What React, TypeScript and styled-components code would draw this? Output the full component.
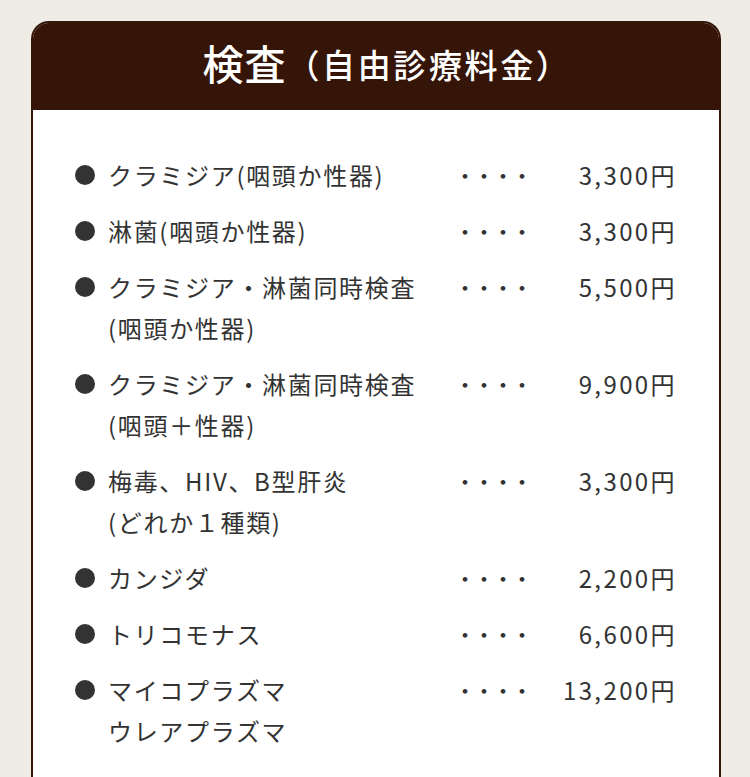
import styled, { createGlobalStyle } from 'styled-components';

const GlobalStyle = createGlobalStyle`
  html, body {
    margin: 0;
    padding: 0;
    background: #efebe5;
  }
  body {
    font-family: "Noto Sans CJK JP", "Noto Sans", sans-serif;
    color: #333;
  }
`;

const Page = styled.div`
  padding: 21px 29px 0 31px;
  height: 756px;
  overflow: hidden;
`;

const Card = styled.section`
  background: #fff;
  border: 2px solid #351507;
  border-bottom: none;
  border-radius: 18px 18px 0 0;
  overflow: hidden;
  min-height: 760px;
`;

const Header = styled.h2`
  margin: 0;
  height: 87px;
  padding: 0 0 10px 22px;
  box-sizing: border-box;
  background: #351507;
  color: #fff;
  display: flex;
  align-items: center;
  justify-content: center;
  font-weight: 500;
  letter-spacing: 0.04em;
`;

const TitleMain = styled.span`
  font-size: 41px;
`;

const TitleSub = styled.span`
  font-size: 33px;
  margin-left: 0;
  margin-top: 4px;
  letter-spacing: 0.08em;
`;

const PriceList = styled.ul`
  list-style: none;
  margin: 0;
  padding: 44px 44px 0 42px;
`;

const Row = styled.li`
  display: grid;
  grid-template-columns: 1fr 80px 150px;
  align-items: start;
  font-size: 24px;
  line-height: 41px;
  letter-spacing: 0.07em;
  margin-bottom: 15px;
`;

const Name = styled.div`
  display: flex;
`;

const Bullet = styled.span`
  flex: none;
  width: 20px;
  height: 20px;
  border-radius: 50%;
  background: #333;
  margin: 11px 13px 0 0;
`;

const Dots = styled.span`
  font-size: 22px;
  letter-spacing: -3px;
  padding-left: 9px;
`;

const Price = styled.span`
  text-align: right;
  letter-spacing: 0.1em;
  margin-right: -2px;
`;

const items = [
  { name: ['クラミジア(咽頭か性器)'], price: '3,300円' },
  { name: ['淋菌(咽頭か性器)'], price: '3,300円' },
  { name: ['クラミジア・淋菌同時検査', '(咽頭か性器)'], price: '5,500円' },
  { name: ['クラミジア・淋菌同時検査', '(咽頭＋性器)'], price: '9,900円' },
  { name: ['梅毒、HIV、B型肝炎', '(どれか１種類)'], price: '3,300円' },
  { name: ['カンジダ'], price: '2,200円' },
  { name: ['トリコモナス'], price: '6,600円' },
  { name: ['マイコプラズマ', 'ウレアプラズマ'], price: '13,200円' },
];

export default function App() {
  return (
    <>
      <GlobalStyle />
      <Page>
        <Card>
          <Header>
            <TitleMain>検査</TitleMain>
            <TitleSub>（自由診療料金）</TitleSub>
          </Header>
          <PriceList>
            {items.map((item) => (
              <Row key={item.name.join('')}>
                <Name>
                  <Bullet />
                  <div>
                    {item.name.map((line) => (
                      <div key={line}>{line}</div>
                    ))}
                  </div>
                </Name>
                <Dots>・・・・</Dots>
                <Price>{item.price}</Price>
              </Row>
            ))}
          </PriceList>
        </Card>
      </Page>
    </>
  );
}
